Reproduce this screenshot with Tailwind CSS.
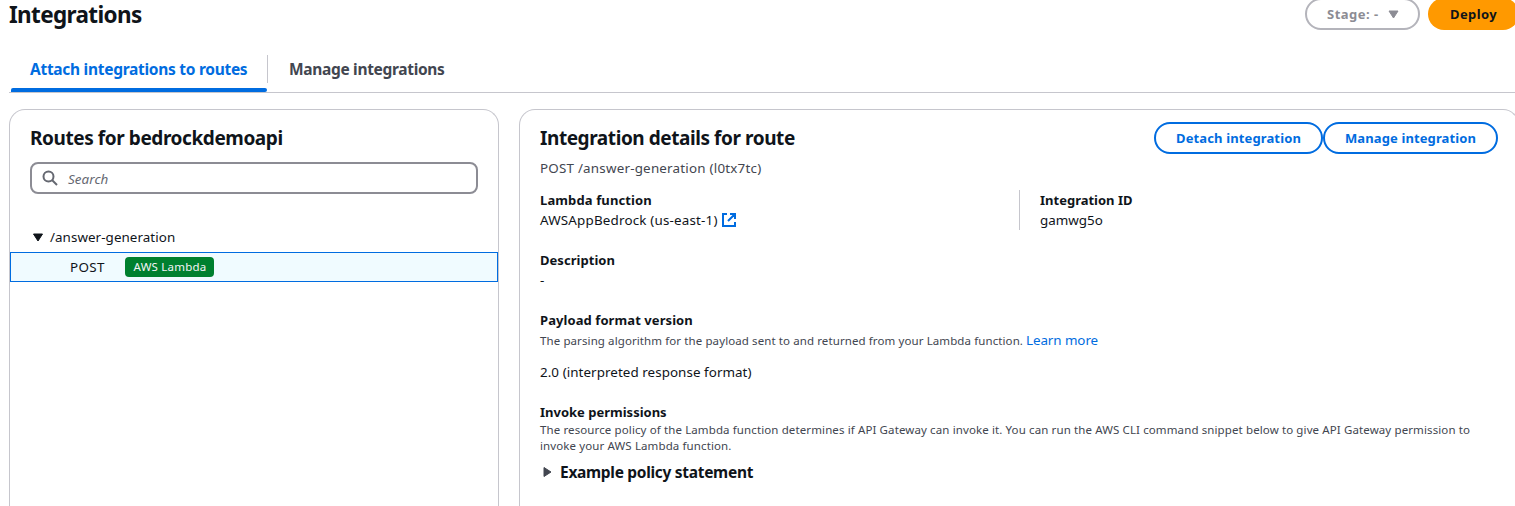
<!DOCTYPE html>
<html lang="en">
<head>
<meta charset="utf-8">
<title>Integrations</title>
<script src="https://cdn.jsdelivr.net/npm/@tailwindcss/browser@4"></script>
</head>
<body class="h-[506px] overflow-hidden bg-white font-['Noto_Sans',sans-serif] text-[13.4px] leading-5 text-[#0f141a]">
<div class="ml-[9px] flex h-[506px] w-[1510px] flex-col">
  <header class="flex h-[30px] shrink-0 items-start justify-between">
    <h1 class="whitespace-nowrap text-[22.5px] font-bold leading-[30px] tracking-[-0.65px]">Integrations</h1>
    <div class="-mt-0.5 flex shrink-0 gap-2 text-[13px] font-bold">
      <button class="flex h-8 w-[115px] items-center rounded-full border-2 border-[#b4b4bb] pl-5 text-[#8c8c94]">
        <span class="w-14 text-left tracking-[0.5px]">Stage: -</span>
        <svg class="ml-[5px] h-[9px] w-[11px]" viewBox="0 0 11 9"><path d="M1 1H10L5.5 8Z" fill="#8c8c94" stroke="#8c8c94" stroke-linejoin="round"/></svg>
      </button>
      <button class="h-8 w-[91px] rounded-full bg-[#ff9900] tracking-[0.4px]">Deploy</button>
    </div>
  </header>

  <nav class="mt-[25px] flex h-[38px] shrink-0 border-b border-[#c6c6cd] pl-0.5 text-[15.5px] font-bold">
    <a class="flex h-[37px] w-64 flex-col justify-between text-[#006ce0]">
      <span class="flex h-7 items-center whitespace-nowrap pl-[19px] tracking-[-0.28px]">Attach integrations to routes</span>
      <span class="h-1 rounded-t-sm rounded-br-sm bg-[#006ce0]"></span>
    </a>
    <a class="flex h-7 items-center whitespace-nowrap border-l border-[#c6c6cd] pl-[21px] tracking-[-0.32px] text-[#424650]">Manage integrations</a>
  </nav>

  <main class="mt-4 flex min-h-0 flex-1 gap-5">
    <section class="w-[490px] shrink-0 rounded-t-2xl border border-b-0 border-[#c6c6cd]">
      <div class="px-5 pt-4">
        <h2 class="whitespace-nowrap text-[19px] font-bold leading-6 tracking-[-0.42px]">Routes for bedrockdemoapi</h2>
        <div class="mt-3 flex h-8 items-center gap-2 rounded-lg border-2 border-[#8c8c94] pl-2.5 text-[#656871]">
          <svg class="h-4 w-4" viewBox="0 0 16 16" fill="none" stroke="#656871" stroke-width="2"><circle cx="6.5" cy="6.5" r="5"/><path d="M10 10L15 15"/></svg>
          <span class="pl-0.5 pt-0.5 tracking-[0.08px] italic">Search</span>
        </div>
      </div>
      <div class="mt-[33px] flex h-5 items-center pl-[22px]">
        <svg class="h-[9px] w-3" viewBox="0 0 12 9"><path d="M1.5 1H10.5L6 8Z" fill="#0f141a" stroke="#0f141a" stroke-linejoin="round"/></svg>
        <span class="pl-1.5 tracking-[0.06px]">/answer-generation</span>
      </div>
      <div class="mt-[5px] flex h-[30px] items-center border border-[#006ce0] bg-[#f0fbff] pl-[59px]">
        <span class="w-[55px] tracking-[0.4px]">POST</span>
        <span class="h-5 w-[89px] rounded bg-[#00802f] pl-px text-center text-[11.5px] tracking-[0.22px] text-[#f3f3f7]">AWS Lambda</span>
      </div>
    </section>

    <section class="w-[1000px] shrink-0 rounded-t-2xl border border-b-0 border-[#c6c6cd] px-5 pt-3">
      <div class="flex h-9 justify-between">
        <h2 class="whitespace-nowrap pt-1 text-[19px] font-bold leading-6 tracking-[-0.43px]">Integration details for route</h2>
        <div class="flex text-[13px] font-bold text-[#006ce0]">
          <button class="h-8 w-[169px] rounded-full border-2 border-[#006ce0] tracking-[0.13px]">Detach integration</button>
          <button class="h-8 w-[175px] rounded-full border-2 border-[#006ce0] tracking-[0.11px]">Manage integration</button>
        </div>
      </div>
      <p class="tracking-[0.21px] text-[#424650]">POST /answer-generation (l0tx7tc)</p>
      <div class="mt-3 grid grid-cols-[479px_1fr]">
        <div>
          <p class="text-[13px] font-bold tracking-[0.12px]">Lambda function</p>
          <p class="flex items-center tracking-[0.18px]">AWSAppBedrock (us-east-1)
            <svg class="ml-[3px] h-4 w-4" viewBox="0 0 16 16" fill="none" stroke="#006ce0" stroke-width="2"><path d="M6 2H2V14H14V10M9 2H14V7M14 2L7 9"/></svg>
          </p>
        </div>
        <div class="border-l border-[#c6c6cd] pl-5">
          <p class="text-[13px] font-bold">Integration ID</p>
          <p>gamwg5o</p>
        </div>
      </div>
      <p class="mt-5 text-[13px] font-bold tracking-[0.04px]">Description</p>
      <p>-</p>
      <p class="mt-5 text-[13px] font-bold tracking-[0.08px]">Payload format version</p>
      <p class="flex h-5 whitespace-nowrap text-[#424650]"><span class="pr-[3px] pt-px text-[11.5px] tracking-[0.1px]">The parsing algorithm for the payload sent to and returned from your Lambda function.</span><a class="tracking-[-0.08px] text-[#006ce0]">Learn more</a></p>
      <p class="mt-3 tracking-[0.06px]">2.0 (interpreted response format)</p>
      <p class="mt-5 text-[13px] font-bold">Invoke permissions</p>
      <p class="whitespace-nowrap text-[11.5px] leading-4 tracking-[0.115px] text-[#424650]">The resource policy of the Lambda function determines if API Gateway can invoke it. You can run the AWS CLI command snippet below to give API Gateway permission to<br>invoke your AWS Lambda function.</p>
      <div class="mt-2 flex h-5 items-center">
        <svg class="ml-[3px] h-3 w-[9px]" viewBox="0 0 9 12"><path d="M1 1.5V10.5L8 6Z" fill="#424650" stroke="#424650" stroke-linejoin="round"/></svg>
        <h3 class="pl-2 text-[15.5px] font-bold tracking-[-0.3px]">Example policy statement</h3>
      </div>
    </section>
  </main>
</div>
</body>
</html>
